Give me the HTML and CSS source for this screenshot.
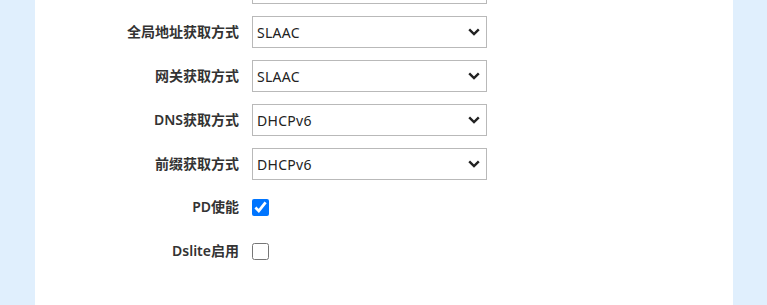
FILE: index.html
```html
<!DOCTYPE html>
<html lang="zh-CN">
<head>
<meta charset="utf-8">
<title>IPv6</title>
<link rel="stylesheet" href="styles.css">
</head>
<body>
<div class="page">
  <div class="panel">
    <form class="form">
      <div class="row">
        <label class="label"></label>
        <div class="select-wrap">
          <select class="select"><option></option></select>
        </div>
      </div>
      <div class="row">
        <label class="label">全局地址获取方式</label>
        <div class="select-wrap">
          <select class="select"><option>SLAAC</option></select>
          <svg class="chev" viewBox="0 0 12 8" width="12" height="8"><path d="M1.2 1.3 L6 6 L10.8 1.3" fill="none" stroke="#222" stroke-width="2.4"/></svg>
        </div>
      </div>
      <div class="row">
        <label class="label">网关获取方式</label>
        <div class="select-wrap">
          <select class="select"><option>SLAAC</option></select>
          <svg class="chev" viewBox="0 0 12 8" width="12" height="8"><path d="M1.2 1.3 L6 6 L10.8 1.3" fill="none" stroke="#222" stroke-width="2.4"/></svg>
        </div>
      </div>
      <div class="row">
        <label class="label">DNS获取方式</label>
        <div class="select-wrap">
          <select class="select"><option>DHCPv6</option></select>
          <svg class="chev" viewBox="0 0 12 8" width="12" height="8"><path d="M1.2 1.3 L6 6 L10.8 1.3" fill="none" stroke="#222" stroke-width="2.4"/></svg>
        </div>
      </div>
      <div class="row">
        <label class="label">前缀获取方式</label>
        <div class="select-wrap">
          <select class="select"><option>DHCPv6</option></select>
          <svg class="chev" viewBox="0 0 12 8" width="12" height="8"><path d="M1.2 1.3 L6 6 L10.8 1.3" fill="none" stroke="#222" stroke-width="2.4"/></svg>
        </div>
      </div>
      <div class="row row-check">
        <label class="label">PD使能</label>
        <input class="check" type="checkbox" checked>
      </div>
      <div class="row row-check">
        <label class="label">Dslite启用</label>
        <input class="check" type="checkbox">
      </div>
    </form>
  </div>
</div>
</body>
</html>
```

FILE: styles.css
```css
html, body {
  margin: 0;
  padding: 0;
  height: 100%;
}
body {
  background: #e0effd;
  font-family: "Noto Sans", "Noto Sans CJK SC", sans-serif;
  color: #333;
  overflow: hidden;
}
.page {
  height: 305px;
  padding-left: 35px;
}
.panel {
  width: 698px;
  height: 305px;
  background: #fff;
  overflow: hidden;
}
.form {
  margin-top: -28px;
}
.row {
  display: flex;
  align-items: center;
  height: 32px;
  margin-bottom: 12px;
}
.label {
  width: 204px;
  text-align: right;
  font-size: 14px;
  font-weight: 600;
  color: #333;
  font-family: "Noto Sans", "Noto Sans CJK SC", sans-serif;
  line-height: 20px;
}
.select-wrap {
  position: relative;
  margin-left: 13px;
  width: 235px;
  height: 32px;
}
.select {
  appearance: none;
  -webkit-appearance: none;
  width: 235px;
  height: 32px;
  margin: 0;
  border: 1px solid #b9b9b9;
  border-radius: 0;
  background: #fff;
  padding: 0 4px;
  font-family: "Noto Sans", sans-serif;
  font-size: 14px;
  letter-spacing: 0.3px;
  color: #222;
  box-sizing: border-box;
}
.chev {
  position: absolute;
  right: 7px;
  top: 12px;
  pointer-events: none;
}
.row-check .label {
  position: relative;
  top: -1px;
}
.check {
  width: 17px;
  height: 17px;
  margin: 0 0 0 13px;
  accent-color: #0075ff;
  position: relative;
  top: -1px;
}
```
